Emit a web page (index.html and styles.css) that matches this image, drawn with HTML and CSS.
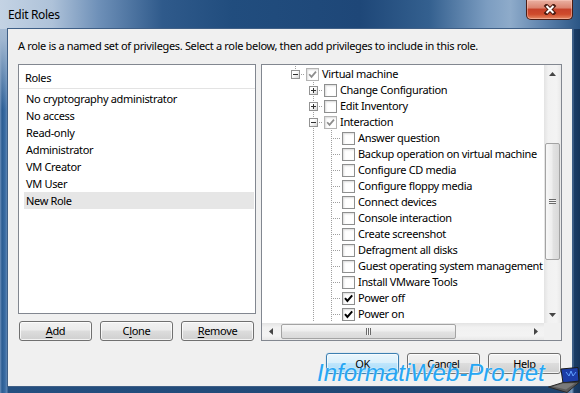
FILE: index.html
```html
<!DOCTYPE html>
<html>
<head>
<meta charset="utf-8">
<title>Edit Roles</title>
<link rel="stylesheet" href="styles.css">
</head>
<body>
<div class="window">
  <div class="titlebar">
    <span class="title">Edit Roles</span>
    <div class="close">
      <svg width="14" height="11" viewBox="0 0 14 11"><path d="M3.5 2l7 7M10.5 2l-7 7" stroke="#4a1a10" stroke-width="4" stroke-linecap="square" fill="none"/><path d="M3.5 2l7 7M10.5 2l-7 7" stroke="#fff" stroke-width="2" fill="none"/></svg>
    </div>
  </div>
  <div class="client">
    <p class="desc">A role is a named set of privileges. Select a role below, then add privileges to include in this role.</p>
    <div class="main">
      <div class="left">
        <div class="list">
          <div class="list-head">Roles</div>
          <div class="items">
            <div class="item">No cryptography administrator</div>
            <div class="item">No access</div>
            <div class="item">Read-only</div>
            <div class="item">Administrator</div>
            <div class="item">VM Creator</div>
            <div class="item">VM User</div>
            <div class="item sel">New Role</div>
          </div>
        </div>
        <div class="btnrow">
          <button class="btn"><u>A</u>dd</button>
          <button class="btn">C<u>l</u>one</button>
          <button class="btn"><u>R</u>emove</button>
        </div>
      </div>
      <div class="tree-panel">
        <div class="tree-body">
          <div class="tree">
            <div class="row"><span class="cell c-top"><span class="exp"></span></span><span class="cell c-bot"><span class="cb gray"><svg width="11" height="11" viewBox="0 0 11 11"><path d="M2.2 5.3l2.3 2.6L9 2.6" fill="none" stroke="#8c8c8c" stroke-width="1.7"/></svg></span></span><span class="label">Virtual machine</span></div>
            <div class="row"><span class="cell"></span><span class="cell c-tee"><span class="exp plus"></span></span><span class="cell"><span class="cb"></span></span><span class="label">Change Configuration</span></div>
            <div class="row"><span class="cell"></span><span class="cell c-tee"><span class="exp plus"></span></span><span class="cell"><span class="cb"></span></span><span class="label">Edit Inventory</span></div>
            <div class="row"><span class="cell"></span><span class="cell c-tee"><span class="exp"></span></span><span class="cell c-bot"><span class="cb gray"><svg width="11" height="11" viewBox="0 0 11 11"><path d="M2.2 5.3l2.3 2.6L9 2.6" fill="none" stroke="#8c8c8c" stroke-width="1.7"/></svg></span></span><span class="label">Interaction</span></div>
            <div class="row"><span class="cell"></span><span class="cell c-full"></span><span class="cell c-tee"></span><span class="cell"><span class="cb"></span></span><span class="label">Answer question</span></div>
            <div class="row"><span class="cell"></span><span class="cell c-full"></span><span class="cell c-tee"></span><span class="cell"><span class="cb"></span></span><span class="label">Backup operation on virtual machine</span></div>
            <div class="row"><span class="cell"></span><span class="cell c-full"></span><span class="cell c-tee"></span><span class="cell"><span class="cb"></span></span><span class="label">Configure CD media</span></div>
            <div class="row"><span class="cell"></span><span class="cell c-full"></span><span class="cell c-tee"></span><span class="cell"><span class="cb"></span></span><span class="label">Configure floppy media</span></div>
            <div class="row"><span class="cell"></span><span class="cell c-full"></span><span class="cell c-tee"></span><span class="cell"><span class="cb"></span></span><span class="label">Connect devices</span></div>
            <div class="row"><span class="cell"></span><span class="cell c-full"></span><span class="cell c-tee"></span><span class="cell"><span class="cb"></span></span><span class="label">Console interaction</span></div>
            <div class="row"><span class="cell"></span><span class="cell c-full"></span><span class="cell c-tee"></span><span class="cell"><span class="cb"></span></span><span class="label">Create screenshot</span></div>
            <div class="row"><span class="cell"></span><span class="cell c-full"></span><span class="cell c-tee"></span><span class="cell"><span class="cb"></span></span><span class="label">Defragment all disks</span></div>
            <div class="row"><span class="cell"></span><span class="cell c-full"></span><span class="cell c-tee"></span><span class="cell"><span class="cb"></span></span><span class="label">Guest operating system management by VIX API</span></div>
            <div class="row"><span class="cell"></span><span class="cell c-full"></span><span class="cell c-tee"></span><span class="cell"><span class="cb"></span></span><span class="label">Install VMware Tools</span></div>
            <div class="row"><span class="cell"></span><span class="cell c-full"></span><span class="cell c-tee"></span><span class="cell"><span class="cb"><svg width="11" height="11" viewBox="0 0 11 11"><path d="M2 5.2l2.4 2.8L9.2 2.4" fill="none" stroke="#000" stroke-width="2"/></svg></span></span><span class="label">Power off</span></div>
            <div class="row"><span class="cell"></span><span class="cell c-full"></span><span class="cell c-tee"></span><span class="cell"><span class="cb"><svg width="11" height="11" viewBox="0 0 11 11"><path d="M2 5.2l2.4 2.8L9.2 2.4" fill="none" stroke="#000" stroke-width="2"/></svg></span></span><span class="label">Power on</span></div>
          </div>
          <div class="vscroll">
            <div class="arrow"><svg width="7" height="4" viewBox="0 0 7 4"><path d="M0 4L3.5 0 7 4z" fill="#454545"/></svg></div>
            <div class="vtrack"><div class="vthumb"><span class="grip-h"></span></div></div>
            <div class="arrow"><svg width="7" height="4" viewBox="0 0 7 4"><path d="M0 0L3.5 4 7 0z" fill="#454545"/></svg></div>
          </div>
        </div>
        <div class="hrow">
          <div class="hscroll">
            <div class="arrow"><svg width="4" height="7" viewBox="0 0 4 7"><path d="M4 0L0 3.5 4 7z" fill="#454545"/></svg></div>
            <div class="htrack"><div class="hthumb"><span class="grip-v"></span></div></div>
            <div class="arrow"><svg width="4" height="7" viewBox="0 0 4 7"><path d="M0 0L4 3.5 0 7z" fill="#454545"/></svg></div>
          </div>
          <div class="corner"></div>
        </div>
      </div>
    </div>
    <div class="footer">
      <button class="btn default">OK</button>
      <button class="btn">Cancel</button>
      <button class="btn">Help</button>
    </div>
  </div>
  <div class="watermark">InformatiWeb-Pro.net</div>
  <svg class="laptop" width="32" height="26" viewBox="0 0 32 26">
    <path d="M13 2L30 0.5 31 14 15 16z" fill="#1c3da8" stroke="#1a1a1a" stroke-width="1"/>
    <path d="M18 5l3 4 2-5 2 5 3-4" fill="none" stroke="#5fa0ff" stroke-width="1"/>
    <path d="M0.5 20L15 15.5 31.5 15 19 25.5z" fill="#5a5a5a" stroke="#2a2a2a" stroke-width="1"/>
    <path d="M5 19.5L15 16.5 27 16.3 18 22.5z" fill="#7a7a7a"/>
  </svg>
</div>
</body>
</html>
```

FILE: styles.css
```css
html, body {
  margin: 0;
  padding: 0;
}

body {
  width: 580px;
  height: 393px;
  overflow: hidden;
  font-family: "Noto Sans", "Open Sans", sans-serif;
  font-size: 11px;
  letter-spacing: -0.33px;
  color: #000;
  --dv: repeating-linear-gradient(to bottom, #a0a0a0 0 1px, transparent 1px 2px);
  --dh: repeating-linear-gradient(to right, #a0a0a0 0 1px, transparent 1px 2px);
}

.window {
  position: relative;
  width: 580px;
  height: 393px;
  display: flex;
  flex-direction: column;
  background:
    linear-gradient(to bottom, #b4c6da 0, #9fb6d0 40px, rgba(60, 100, 150, 0) 110px) 0 0 / 7px 100% no-repeat,
    linear-gradient(to right, #6d90bb 0, #2c5d93 2px, #3a6ca3 5px, #5f86b4 7px, #244f80 8px, #1e446f 97%, #7d9cc0 98.6%, #1b3d66 99%, #15345a 100%);
}

/* title bar */
.titlebar {
  flex: none;
  height: 29px;
  display: flex;
  justify-content: space-between;
  align-items: flex-start;
  background: linear-gradient(to right, #c4d3e4 0%, #aec2d9 9%, #6e90b8 17%, #2f5a8b 28%, #214d7e 40%, #1e4778 62%, #34608f 74%, #7c9dc1 84%, #8eabca 88%, #5b80ab 94%, #2b5685 100%);
}

.title {
  padding: 7px 0 0 8px;
  font-size: 12px;
  line-height: 16px;
}

.close {
  width: 47px;
  height: 20px;
  margin-right: 7px;
  box-sizing: border-box;
  border: 1px solid #4b1d14;
  border-top: none;
  border-radius: 0 0 5px 5px;
  background: linear-gradient(#eab1a3 0%, #dc8571 40%, #c7422a 50%, #cf4b2c 75%, #e68a63 100%);
  box-shadow: inset 0 0 0 1px rgba(255, 210, 200, 0.45);
  display: flex;
  align-items: center;
  justify-content: center;
}

/* client area */
.client {
  margin: 0 8px;
  height: 357px;
  box-sizing: border-box;
  padding: 9px 10px 0;
  background: #f0f0f0;
  box-shadow: 0 0 0 1px #3f5f86;
  display: flex;
  flex-direction: column;
}

.desc {
  margin: 0;
  height: 16px;
  line-height: 16px;
}

.main {
  margin-top: 10px;
  height: 277px;
  display: flex;
  gap: 5px;
}

.left {
  width: 238px;
  display: flex;
  flex-direction: column;
  gap: 7px;
}

.list {
  height: 250px;
  box-sizing: border-box;
  border: 1px solid #828790;
  background: #fff;
}

.list-head {
  height: 24px;
  box-sizing: border-box;
  border-bottom: 1px solid #e3e3e3;
  padding: 2px 0 0 6px;
  line-height: 22px;
}

.items {
  padding-top: 1px;
}

.item {
  height: 17px;
  line-height: 17px;
  margin: 0 1px 0 5px;
  padding-left: 2px;
}

.item.sel {
  background: #e6e6e6;
}

.btnrow {
  display: flex;
  gap: 8px;
  padding-left: 1px;
}

.btn {
  width: 73px;
  height: 20px;
  box-sizing: border-box;
  padding: 0;
  border: 1px solid #707070;
  border-radius: 3px;
  background: linear-gradient(#f2f2f2 0%, #ebebeb 45%, #dddddd 50%, #cfcfcf 100%);
  box-shadow: inset 0 0 0 1px rgba(255, 255, 255, 0.75);
  font: inherit;
  letter-spacing: inherit;
  color: #000;
  line-height: 16px;
}

.btn u {
  text-decoration-thickness: 1px;
  text-underline-offset: 2px;
}

.btn.default {
  border-color: #3c7fb1;
  background: linear-gradient(#eaf6fd 0%, #d9f0fc 45%, #bee6fd 50%, #a7d9f5 100%);
  box-shadow: inset 0 0 0 1px rgba(255, 255, 255, 0.6), 0 0 1px #6ab4e8;
}

/* tree panel */
.tree-panel {
  width: 301px;
  box-sizing: border-box;
  border: 1px solid #828790;
  background: #fff;
  display: flex;
  flex-direction: column;
}

.tree-body {
  height: 258px;
  display: flex;
}

.tree {
  flex: 1;
  min-width: 0;
  overflow: hidden;
  padding: 1px 0 0 24px;
  box-sizing: border-box;
}

.row {
  height: 16px;
  display: flex;
  align-items: center;
  white-space: nowrap;
}

.cell {
  flex: none;
  width: 18px;
  height: 16px;
  display: flex;
  align-items: center;
}

.label {
  line-height: 16px;
}

.c-full {
  background: var(--dv) 9px 0 / 1px 16px no-repeat;
}

.c-tee {
  background: var(--dv) 9px 0 / 1px 16px no-repeat, var(--dh) 9px 8px / 9px 1px no-repeat;
}

.c-top {
  background: var(--dv) 9px 0 / 1px 8px no-repeat, var(--dh) 9px 8px / 9px 1px no-repeat;
}

.c-bot {
  background: var(--dv) 9px 8px / 1px 8px no-repeat;
}

.exp {
  width: 9px;
  height: 9px;
  margin-left: 5px;
  box-sizing: border-box;
  border: 1px solid #939393;
  background:
    linear-gradient(#303030, #303030) center / 5px 1px no-repeat,
    linear-gradient(135deg, #ffffff 35%, #d6d6d6);
}

.exp.plus {
  background:
    linear-gradient(#303030, #303030) center / 5px 1px no-repeat,
    linear-gradient(#303030, #303030) center / 1px 5px no-repeat,
    linear-gradient(135deg, #ffffff 35%, #d6d6d6);
}

.cb {
  width: 13px;
  height: 13px;
  margin-left: 2px;
  box-sizing: border-box;
  border: 1px solid #8e8f8f;
  background: #fff;
  box-shadow: inset 1px 1px 2px #dadada;
  display: flex;
  align-items: center;
  justify-content: center;
}

.cb.gray {
  border-color: #b4b4b4;
}

/* scrollbars */
.vscroll {
  flex: none;
  width: 17px;
  display: flex;
  flex-direction: column;
  background: linear-gradient(to right, #e3e3e3, #f1f1f1 25%, #f3f3f3 75%, #e8e8e8);
}

.arrow {
  flex: none;
  width: 17px;
  height: 17px;
  display: flex;
  align-items: center;
  justify-content: center;
}

.vtrack {
  flex: 1;
}

.vthumb {
  margin: 61px 1px 0;
  height: 117px;
  box-sizing: border-box;
  border: 1px solid #a3a3a3;
  border-radius: 2px;
  background: linear-gradient(to right, #f7f7f7, #eeeeee 45%, #e2e2e2 55%, #d9d9d9);
  display: flex;
  align-items: center;
  justify-content: center;
}

.grip-h {
  width: 7px;
  height: 5px;
  background: repeating-linear-gradient(to bottom, #6a6a6a 0 1px, #f4f4f4 1px 2px);
}

.hrow {
  height: 17px;
  display: flex;
}

.hscroll {
  flex: 1;
  display: flex;
  align-items: center;
  background: linear-gradient(#e3e3e3, #f1f1f1 25%, #f3f3f3 75%, #e8e8e8);
}

.htrack {
  flex: 1;
  height: 17px;
  display: flex;
  align-items: center;
}

.hthumb {
  margin-left: 2px;
  width: 175px;
  height: 15px;
  box-sizing: border-box;
  border: 1px solid #a3a3a3;
  border-radius: 2px;
  background: linear-gradient(#f7f7f7, #eeeeee 45%, #e2e2e2 55%, #d9d9d9);
  display: flex;
  align-items: center;
  justify-content: center;
}

.grip-v {
  width: 5px;
  height: 7px;
  background: repeating-linear-gradient(to right, #6a6a6a 0 1px, #f4f4f4 1px 2px);
}

.corner {
  flex: none;
  width: 17px;
  background: #f0f0f0;
}

.footer {
  margin-top: 12px;
  display: flex;
  justify-content: flex-end;
  gap: 8px;
  padding-right: 1px;
}

.footer .btn {
  height: 21px;
}

/* overlays */
.watermark {
  position: absolute;
  left: 317px;
  top: 358px;
  font-family: "Liberation Sans", Arial, sans-serif;
  font-style: italic;
  font-size: 24px;
  letter-spacing: 0;
  line-height: 30px;
  color: #27a6f3;
  text-shadow: 0 0 1px #d6f0ff, 0 0 2px rgba(255, 255, 255, 0.7);
  white-space: nowrap;
}

.laptop {
  position: absolute;
  right: 0;
  bottom: 0;
}
```
